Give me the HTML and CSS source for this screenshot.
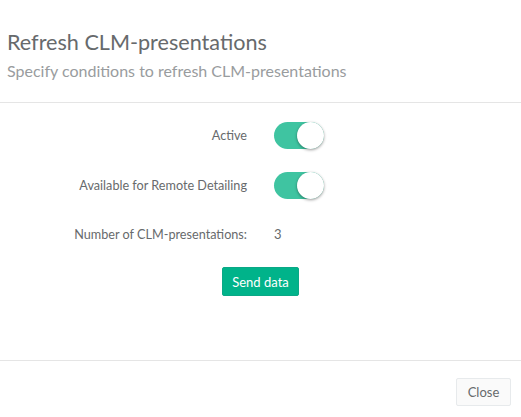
FILE: index.html
```html
<!DOCTYPE html>
<html>
<head>
<meta charset="utf-8">
<link rel="stylesheet" href="styles.css">
</head>
<body>
<div class="modal">
  <div class="header">
    <h4 class="title">Refresh CLM-presentations</h4>
    <div class="subtitle">Specify conditions to refresh CLM-presentations</div>
  </div>
  <div class="body">
    <div class="row">
      <div class="label">Active</div>
      <div class="value"><span class="toggle"><span class="knob"></span></span></div>
    </div>
    <div class="row">
      <div class="label">Available for Remote Detailing</div>
      <div class="value"><span class="toggle"><span class="knob"></span></span></div>
    </div>
    <div class="row">
      <div class="label">Number of CLM-presentations:</div>
      <div class="value">3</div>
    </div>
    <div class="actions">
      <button class="btn-primary">Send data</button>
    </div>
  </div>
  <div class="footer">
    <button class="btn-default">Close</button>
  </div>
</div>
</body>
</html>
```
FILE: styles.css
```css
html, body {
  margin: 0;
  padding: 0;
  background: #fff;
}
body {
  font-family: Lato, "Open Sans", Arial, sans-serif;
  color: #676a6c;
  font-size: 12.65px;
}
.modal {
  width: 521px;
  height: 417px;
  display: flex;
  flex-direction: column;
}
.header {
  padding: 29px 7px 0 7px;
  height: 73px;
  border-bottom: 1px solid #e5e5e5;
}
.title {
  margin: 0;
  font-size: 21.6px;
  font-weight: 400;
  line-height: 26px;
  color: #676a6c;
}
.subtitle {
  margin-top: 6px;
  font-size: 16px;
  line-height: 19px;
  color: #999c9e;
}
.body {
  flex: 1;
  padding-top: 18px;
  border-bottom: 1px solid #e5e5e5;
}
.row {
  display: grid;
  grid-template-columns: 247px 1fr;
  column-gap: 27px;
  align-items: center;
  height: 28px;
  margin-bottom: 22px;
}
.row + .row + .row {
  margin-top: -1px;
}
.label {
  text-align: right;
}
.value {
  display: flex;
  align-items: center;
  font-size: 13px;
}
.toggle {
  display: inline-block;
  width: 50px;
  height: 27px;
  border-radius: 14px;
  background: #3fc4a1;
  position: relative;
}
.knob {
  position: absolute;
  right: 0;
  top: 0;
  width: 27px;
  height: 27px;
  border-radius: 50%;
  background: #fff;
  box-shadow: 0 1px 3px rgba(0,0,0,0.4);
}
.actions {
  display: flex;
  justify-content: flex-start;
  padding-left: 222px;
  margin-top: -3px;
}
.btn-primary {
  font-family: Lato, "Open Sans", Arial, sans-serif;
  background: #00b38a;
  color: #fff;
  border: 1px solid #0aa886;
  border-radius: 2px;
  font-size: 13px;
  width: 77px;
  height: 29px;
  padding: 0;
}
.footer {
  height: 56px;
  display: flex;
  justify-content: flex-end;
  align-items: flex-start;
  padding-top: 17px;
  padding-right: 10px;
  box-sizing: border-box;
}
.btn-default {
  font-family: Lato, "Open Sans", Arial, sans-serif;
  background: #fafafa;
  color: #676a6c;
  border: 1px solid #e7eaec;
  border-radius: 2px;
  font-size: 13px;
  width: 55px;
  height: 28px;
  padding: 0;
}
```
